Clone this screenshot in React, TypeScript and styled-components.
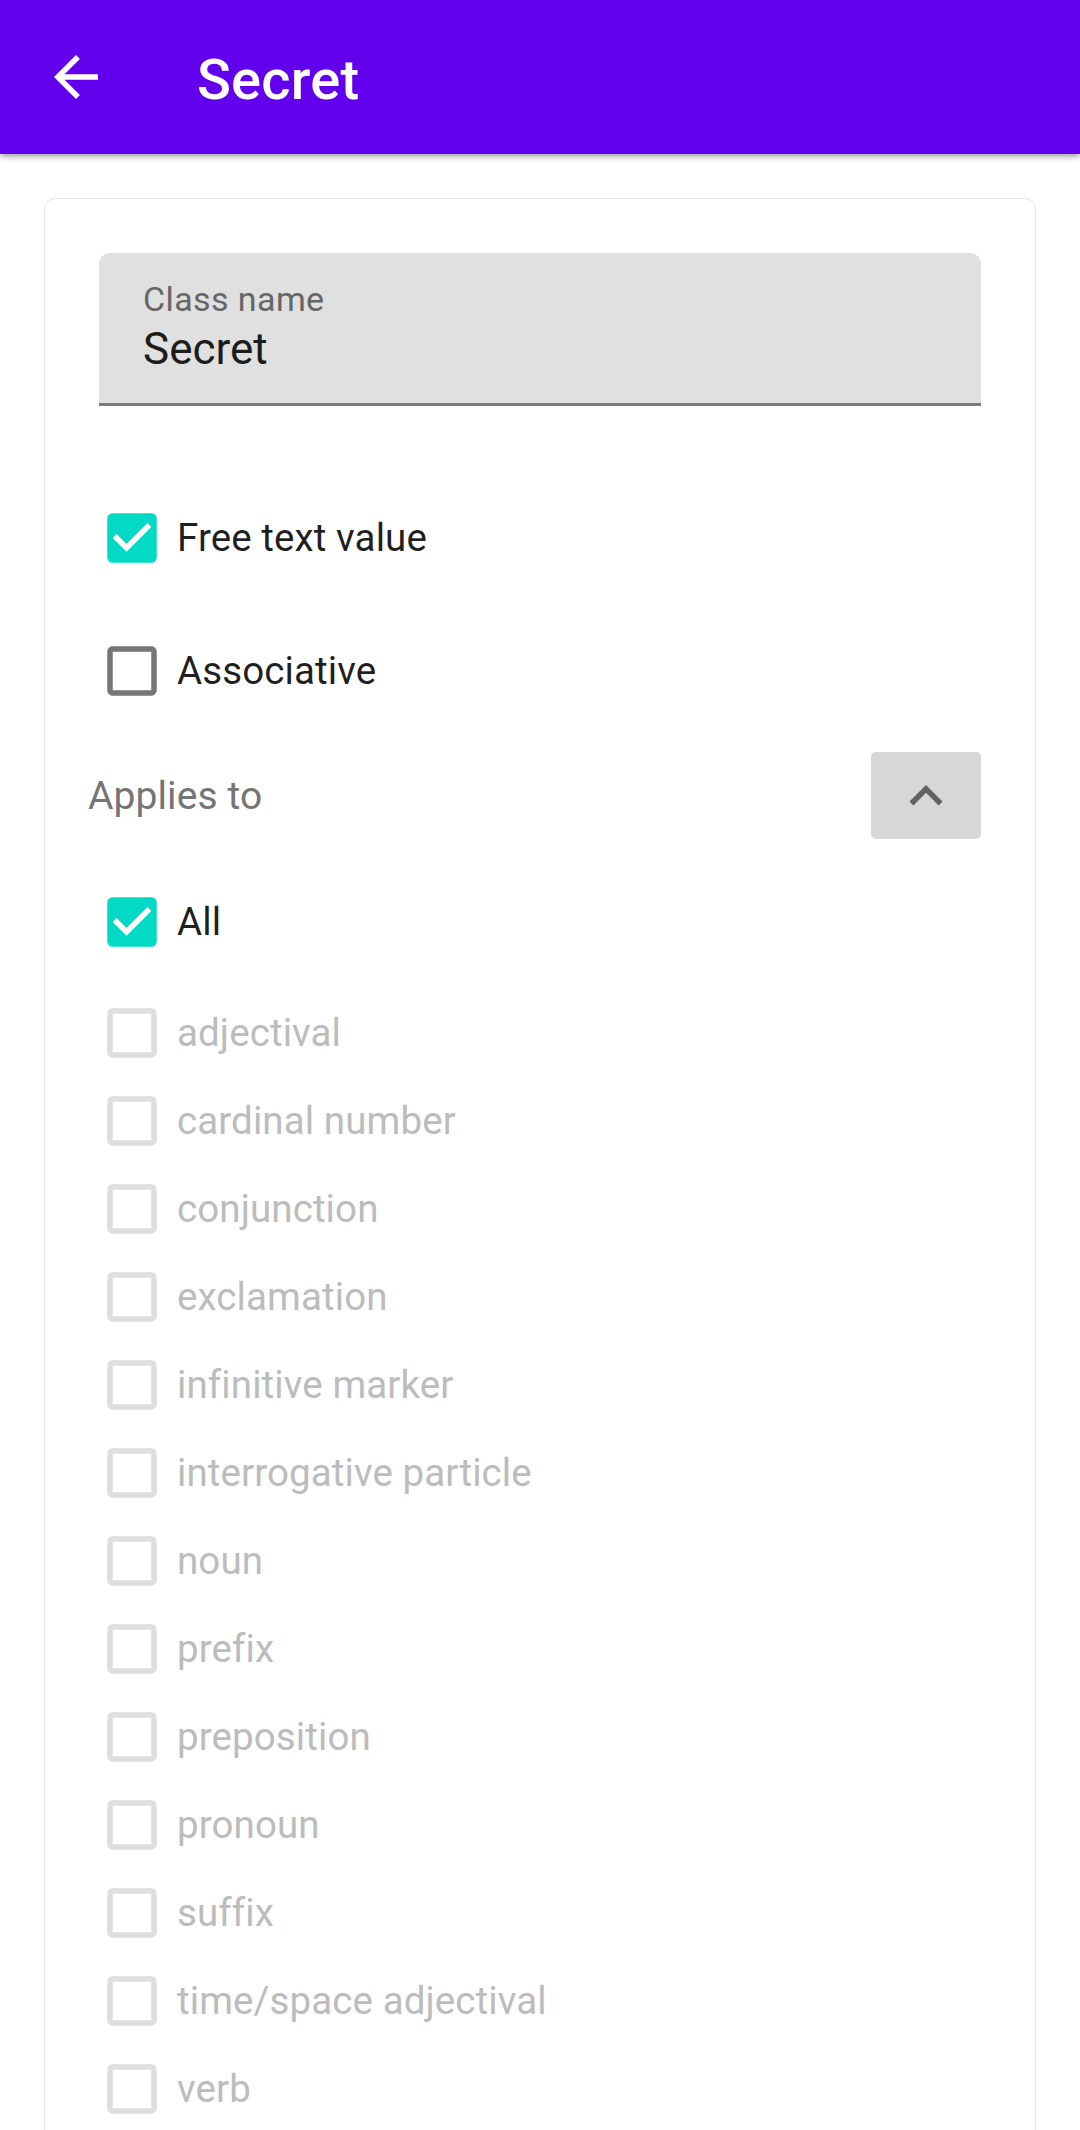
import React from "react";
import styled, { createGlobalStyle } from "styled-components";

const Global = createGlobalStyle`
  html, body { margin: 0; padding: 0; background: #ffffff; }
  body { font-family: Roboto, "Noto Sans", "Liberation Sans", sans-serif; -webkit-font-smoothing: antialiased; }
  * { box-sizing: border-box; }
`;

const Page = styled.div`
  width: 1080px;
  min-height: 2130px;
  background: #fff;
  overflow: hidden;
`;

const AppBar = styled.header`
  position: relative;
  z-index: 2;
  height: 154px;
  background: #6200ee;
  display: flex;
  align-items: center;
  padding-left: 43px;
  box-shadow: 0 2px 4px -1px rgba(0, 0, 0, 0.2), 0 4px 5px 0 rgba(0, 0, 0, 0.14),
    0 1px 10px 0 rgba(0, 0, 0, 0.12);
`;

const IconButton = styled.div`
  width: 66px;
  height: 66px;
  display: flex;
  align-items: center;
  justify-content: center;
  svg { display: block; }
`;

const Title = styled.h1`
  margin: 5px 0 0 88px;
  font-size: 56px;
  font-weight: 500;
  color: #ffffff;
  line-height: 66px;
  letter-spacing: 0.2px;
`;

const Card = styled.section`
  margin: 44px 44px 0;
  border: 1px solid #e6e6e6;
  border-radius: 11px;
  padding: 54px 54px 200px;
  display: flex;
  flex-direction: column;
`;

const Field = styled.div`
  height: 153px;
  background: #e0e0e0;
  border-radius: 11px 11px 0 0;
  border-bottom: 3px solid #7b7b7b;
  padding: 29px 0 0 44px;
  display: flex;
  flex-direction: column;
`;

const FieldLabel = styled.label`
  font-size: 34px;
  line-height: 34px;
  color: #666666;
  letter-spacing: 0.4px;
`;

const FieldValue = styled.div`
  margin-top: 11px;
  font-size: 44px;
  line-height: 44px;
  color: #1c1c1c;
`;

const Row = styled.div<{ $mt: number; $h?: number }>`
  display: flex;
  align-items: center;
  height: ${(p) => p.$h ?? 66}px;
  margin-top: ${(p) => p.$mt}px;
`;

const Label = styled.span<{ $disabled?: boolean }>`
  margin-left: 12px;
  font-size: 38.5px;
  line-height: 44px;
  letter-spacing: 0.1px;
  color: ${(p) => (p.$disabled ? "#bcbcbc" : "rgba(0,0,0,0.88)")};
`;

const SectionHeader = styled.div`
  display: flex;
  align-items: center;
  justify-content: space-between;
  margin: 48px 0 0 -11px;
`;

const SectionTitle = styled.span`
  font-size: 39px;
  color: #757575;
  letter-spacing: 0.1px;
`;

const CollapseButton = styled.button`
  width: 110px;
  height: 87px;
  border: none;
  border-radius: 5px;
  background: #d6d7d7;
  display: flex;
  align-items: center;
  justify-content: center;
  padding: 0;
  svg { display: block; }
`;

const List = styled.div`
  display: flex;
  flex-direction: column;
  margin-top: 34px;
`;

type BoxState = "checked" | "unchecked" | "disabled";

const CheckIcon: React.FC<{ state: BoxState }> = ({ state }) => {
  if (state === "checked") {
    return (
      <svg width="66" height="66" viewBox="0 0 24 24">
        <rect x="3" y="3" width="18" height="18" rx="2" fill="#03dac5" />
        <path d="M10 17l-5-5 1.41-1.41L10 14.17l7.59-7.59L19 8l-9 9z" fill="#ffffff" />
      </svg>
    );
  }
  const color = state === "disabled" ? "#dedede" : "#767676";
  return (
    <svg width="66" height="66" viewBox="0 0 24 24">
      <path
        d="M19 5v14H5V5h14m0-2H5c-1.1 0-2 .9-2 2v14c0 1.1.9 2 2 2h14c1.1 0 2-.9 2-2V5c0-1.1-.9-2-2-2z"
        fill={color}
      />
    </svg>
  );
};

const parts = [
  "adjectival",
  "cardinal number",
  "conjunction",
  "exclamation",
  "infinitive marker",
  "interrogative particle",
  "noun",
  "prefix",
  "preposition",
  "pronoun",
  "suffix",
  "time/space adjectival",
  "verb",
];

export default function App() {
  return (
    <Page>
      <Global />
      <AppBar>
        <IconButton>
          <svg width="66" height="66" viewBox="0 0 24 24">
            <path d="M20 11H7.83l5.59-5.59L12 4l-8 8 8 8 1.41-1.41L7.83 13H20v-2z" fill="#ffffff" />
          </svg>
        </IconButton>
        <Title>Secret</Title>
      </AppBar>
      <Card>
        <Field>
          <FieldLabel>Class name</FieldLabel>
          <FieldValue>Secret</FieldValue>
        </Field>
        <Row $mt={99}>
          <CheckIcon state="checked" />
          <Label>Free text value</Label>
        </Row>
        <Row $mt={67}>
          <CheckIcon state="unchecked" />
          <Label>Associative</Label>
        </Row>
        <SectionHeader>
          <SectionTitle>Applies to</SectionTitle>
          <CollapseButton aria-label="collapse">
            <svg width="66" height="66" viewBox="0 0 24 24">
              <path d="M12 8l-6 6 1.41 1.41L12 10.83l4.59 4.58L18 14z" fill="#616161" />
            </svg>
          </CollapseButton>
        </SectionHeader>
        <Row $mt={50}>
          <CheckIcon state="checked" />
          <Label>All</Label>
        </Row>
        <List>
          {parts.map((p) => (
            <Row key={p} $mt={0} $h={88}>
              <CheckIcon state="disabled" />
              <Label $disabled>{p}</Label>
            </Row>
          ))}
        </List>
      </Card>
    </Page>
  );
}
